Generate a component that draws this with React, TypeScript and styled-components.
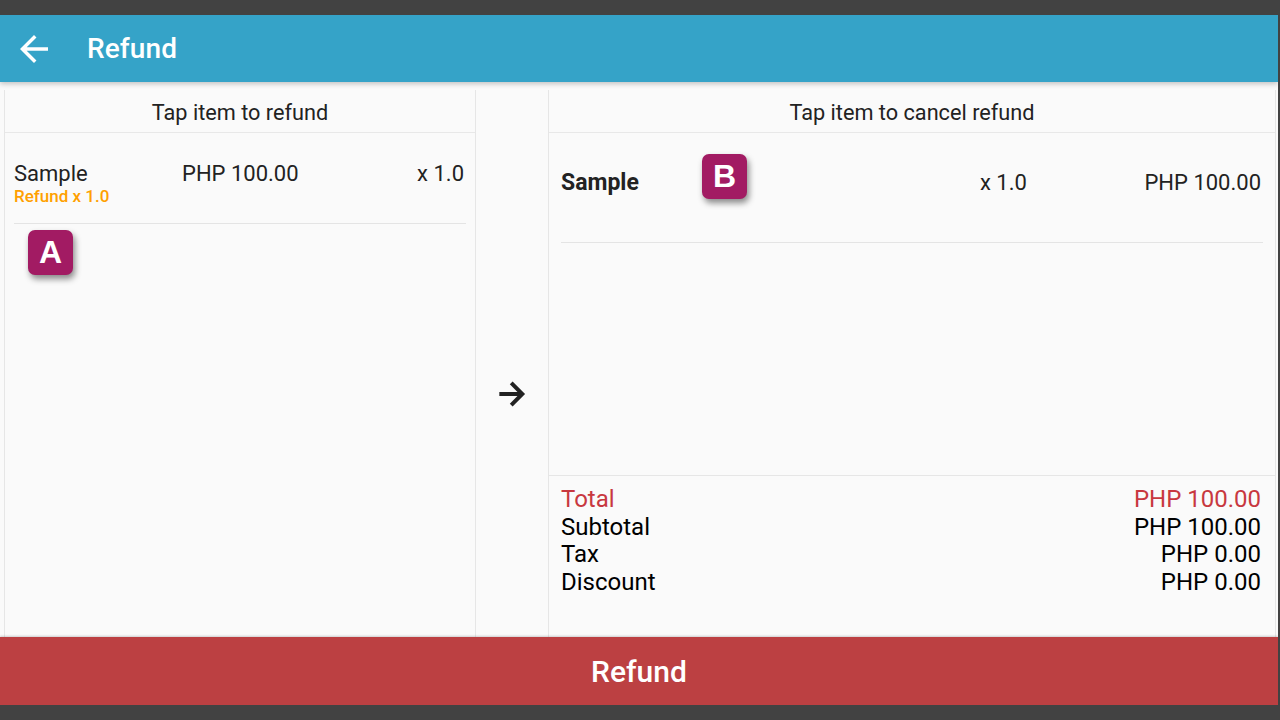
import React from "react";
import styled, { createGlobalStyle } from "styled-components";

const GlobalStyle = createGlobalStyle`
  html, body {
    margin: 0;
    padding: 0;
    background: #424242;
    font-family: Roboto, "Noto Sans", Arial, sans-serif;
  }
  * { box-sizing: border-box; }
`;

const Screen = styled.div`
  width: 1278px;
  height: 690px;
  margin-top: 15px;
  background: #fafafa;
  display: flex;
  flex-direction: column;
  overflow: hidden;
`;

const AppBar = styled.header`
  height: 67px;
  flex: none;
  background: #35a3c8;
  display: flex;
  align-items: center;
  position: relative;
  z-index: 2;
  box-shadow: 0 2px 5px rgba(0, 0, 0, 0.22);
`;

const BackButton = styled.button`
  width: 42px;
  height: 42px;
  margin-left: 13px;
  padding: 0;
  border: none;
  background: transparent;
  display: flex;
  align-items: center;
  justify-content: center;
`;

const AppTitle = styled.h1`
  margin: 0 0 0 32px;
  font-size: 28px;
  font-weight: 500;
  color: #ffffff;
  letter-spacing: 0.1px;
`;

const Main = styled.main`
  flex: 1;
  display: flex;
  padding: 8px 2px 0 4px;
  min-height: 0;
`;

const Panel = styled.section<{ $width?: number }>`
  position: relative;
  ${(p) => (p.$width ? `width: ${p.$width}px; flex: none;` : "flex: 1;")}
  display: flex;
  flex-direction: column;
  border-left: 1px solid #e6e6e6;
  border-right: 1px solid #e6e6e6;
`;

const PanelHeader = styled.div`
  height: 43px;
  flex: none;
  display: flex;
  align-items: center;
  justify-content: center;
  padding-top: 2px;
  border-bottom: 1px solid #e8e8e8;
  font-size: 21.7px;
  color: #222222;
`;

const Middle = styled.div`
  width: 72px;
  flex: none;
  display: flex;
  align-items: center;
  justify-content: center;
  padding-top: 60px;
`;

const ItemList = styled.div<{ $inset: number }>`
  flex: 1;
  padding: 0 ${(p) => p.$inset}px;
`;

const ItemRow = styled.div<{ $cols: string; $pt: number; $pb: number }>`
  display: grid;
  grid-template-columns: ${(p) => p.$cols};
  align-items: start;
  padding: ${(p) => p.$pt}px 2px ${(p) => p.$pb}px 0;
  border-bottom: 1px solid #e4e4e4;
  color: #222222;
`;

const ItemName = styled.div<{ $bold?: boolean }>`
  font-size: ${(p) => (p.$bold ? 23 : 22)}px;
  font-weight: ${(p) => (p.$bold ? 700 : 400)};
  line-height: 25px;
`;

const RefundNote = styled.div`
  font-size: 17px;
  font-weight: 500;
  line-height: 20px;
  color: #ffa000;
`;

const Cell = styled.div<{ $right?: boolean }>`
  font-size: 22px;
  line-height: 25px;
  text-align: ${(p) => (p.$right ? "right" : "left")};
`;

const Totals = styled.div`
  flex: none;
  height: 162px;
  border-top: 1px solid #e6e6e6;
  padding: 10px 14px 0 12px;
`;

const TotalRow = styled.div<{ $accent?: boolean }>`
  display: flex;
  justify-content: space-between;
  font-size: 24px;
  line-height: 27.5px;
  color: ${(p) => (p.$accent ? "#c8383f" : "#000000")};
`;

const RefundBar = styled.button`
  height: 68px;
  flex: none;
  width: 100%;
  border: none;
  background: #bc4042;
  color: #ffffff;
  font-family: Roboto, sans-serif;
  font-size: 30px;
  font-weight: 500;
  position: relative;
  z-index: 1;
  box-shadow: 0 -1px 2px rgba(0, 0, 0, 0.18);
`;

const Badge = styled.div<{ $left: number; $top: number }>`
  position: absolute;
  left: ${(p) => p.$left}px;
  top: ${(p) => p.$top}px;
  width: 45px;
  height: 45px;
  border-radius: 7px;
  background: #a21b63;
  color: #ffffff;
  font-family: "Liberation Sans", Arial, sans-serif;
  font-weight: 700;
  font-size: 32px;
  display: flex;
  align-items: center;
  justify-content: center;
  box-shadow: 2px 4px 6px rgba(0, 0, 0, 0.45);
`;

const ArrowBack = () => (
  <svg width="42" height="42" viewBox="0 0 24 24" fill="#ffffff">
    <path d="M20 11H7.83l5.59-5.59L12 4l-8 8 8 8 1.41-1.41L7.83 13H20v-2z" />
  </svg>
);

const ArrowForward = () => (
  <svg width="38" height="38" viewBox="0 0 24 24" fill="none" stroke="#222222" strokeWidth="2.5" strokeLinecap="butt" strokeLinejoin="miter">
    <path d="M4 12h14.5M11.5 5l7 7-7 7" />
  </svg>
);

const totals = [
  { label: "Total", value: "PHP 100.00", accent: true },
  { label: "Subtotal", value: "PHP 100.00" },
  { label: "Tax", value: "PHP 0.00" },
  { label: "Discount", value: "PHP 0.00" },
];

export default function App() {
  return (
    <>
      <GlobalStyle />
      <Screen>
        <AppBar>
          <BackButton aria-label="Back">
            <ArrowBack />
          </BackButton>
          <AppTitle>Refund</AppTitle>
        </AppBar>
        <Main>
          <Panel $width={472}>
            <PanelHeader>Tap item to refund</PanelHeader>
            <ItemList $inset={9}>
              <ItemRow $cols="168px 1fr auto" $pt={28} $pb={17}>
                <div>
                  <ItemName>Sample</ItemName>
                  <RefundNote>Refund x 1.0</RefundNote>
                </div>
                <Cell>PHP 100.00</Cell>
                <Cell $right>x 1.0</Cell>
              </ItemRow>
            </ItemList>
            <Badge $left={23} $top={140}>A</Badge>
          </Panel>
          <Middle>
            <ArrowForward />
          </Middle>
          <Panel>
            <PanelHeader>Tap item to cancel refund</PanelHeader>
            <ItemList $inset={12}>
              <ItemRow $cols="419px 1fr auto" $pt={37} $pb={47}>
                <ItemName $bold>Sample</ItemName>
                <Cell>x 1.0</Cell>
                <Cell $right>PHP 100.00</Cell>
              </ItemRow>
            </ItemList>
            <Totals>
              {totals.map((t) => (
                <TotalRow key={t.label} $accent={t.accent}>
                  <span>{t.label}</span>
                  <span>{t.value}</span>
                </TotalRow>
              ))}
            </Totals>
            <Badge $left={153} $top={64}>B</Badge>
          </Panel>
        </Main>
        <RefundBar>Refund</RefundBar>
      </Screen>
    </>
  );
}
